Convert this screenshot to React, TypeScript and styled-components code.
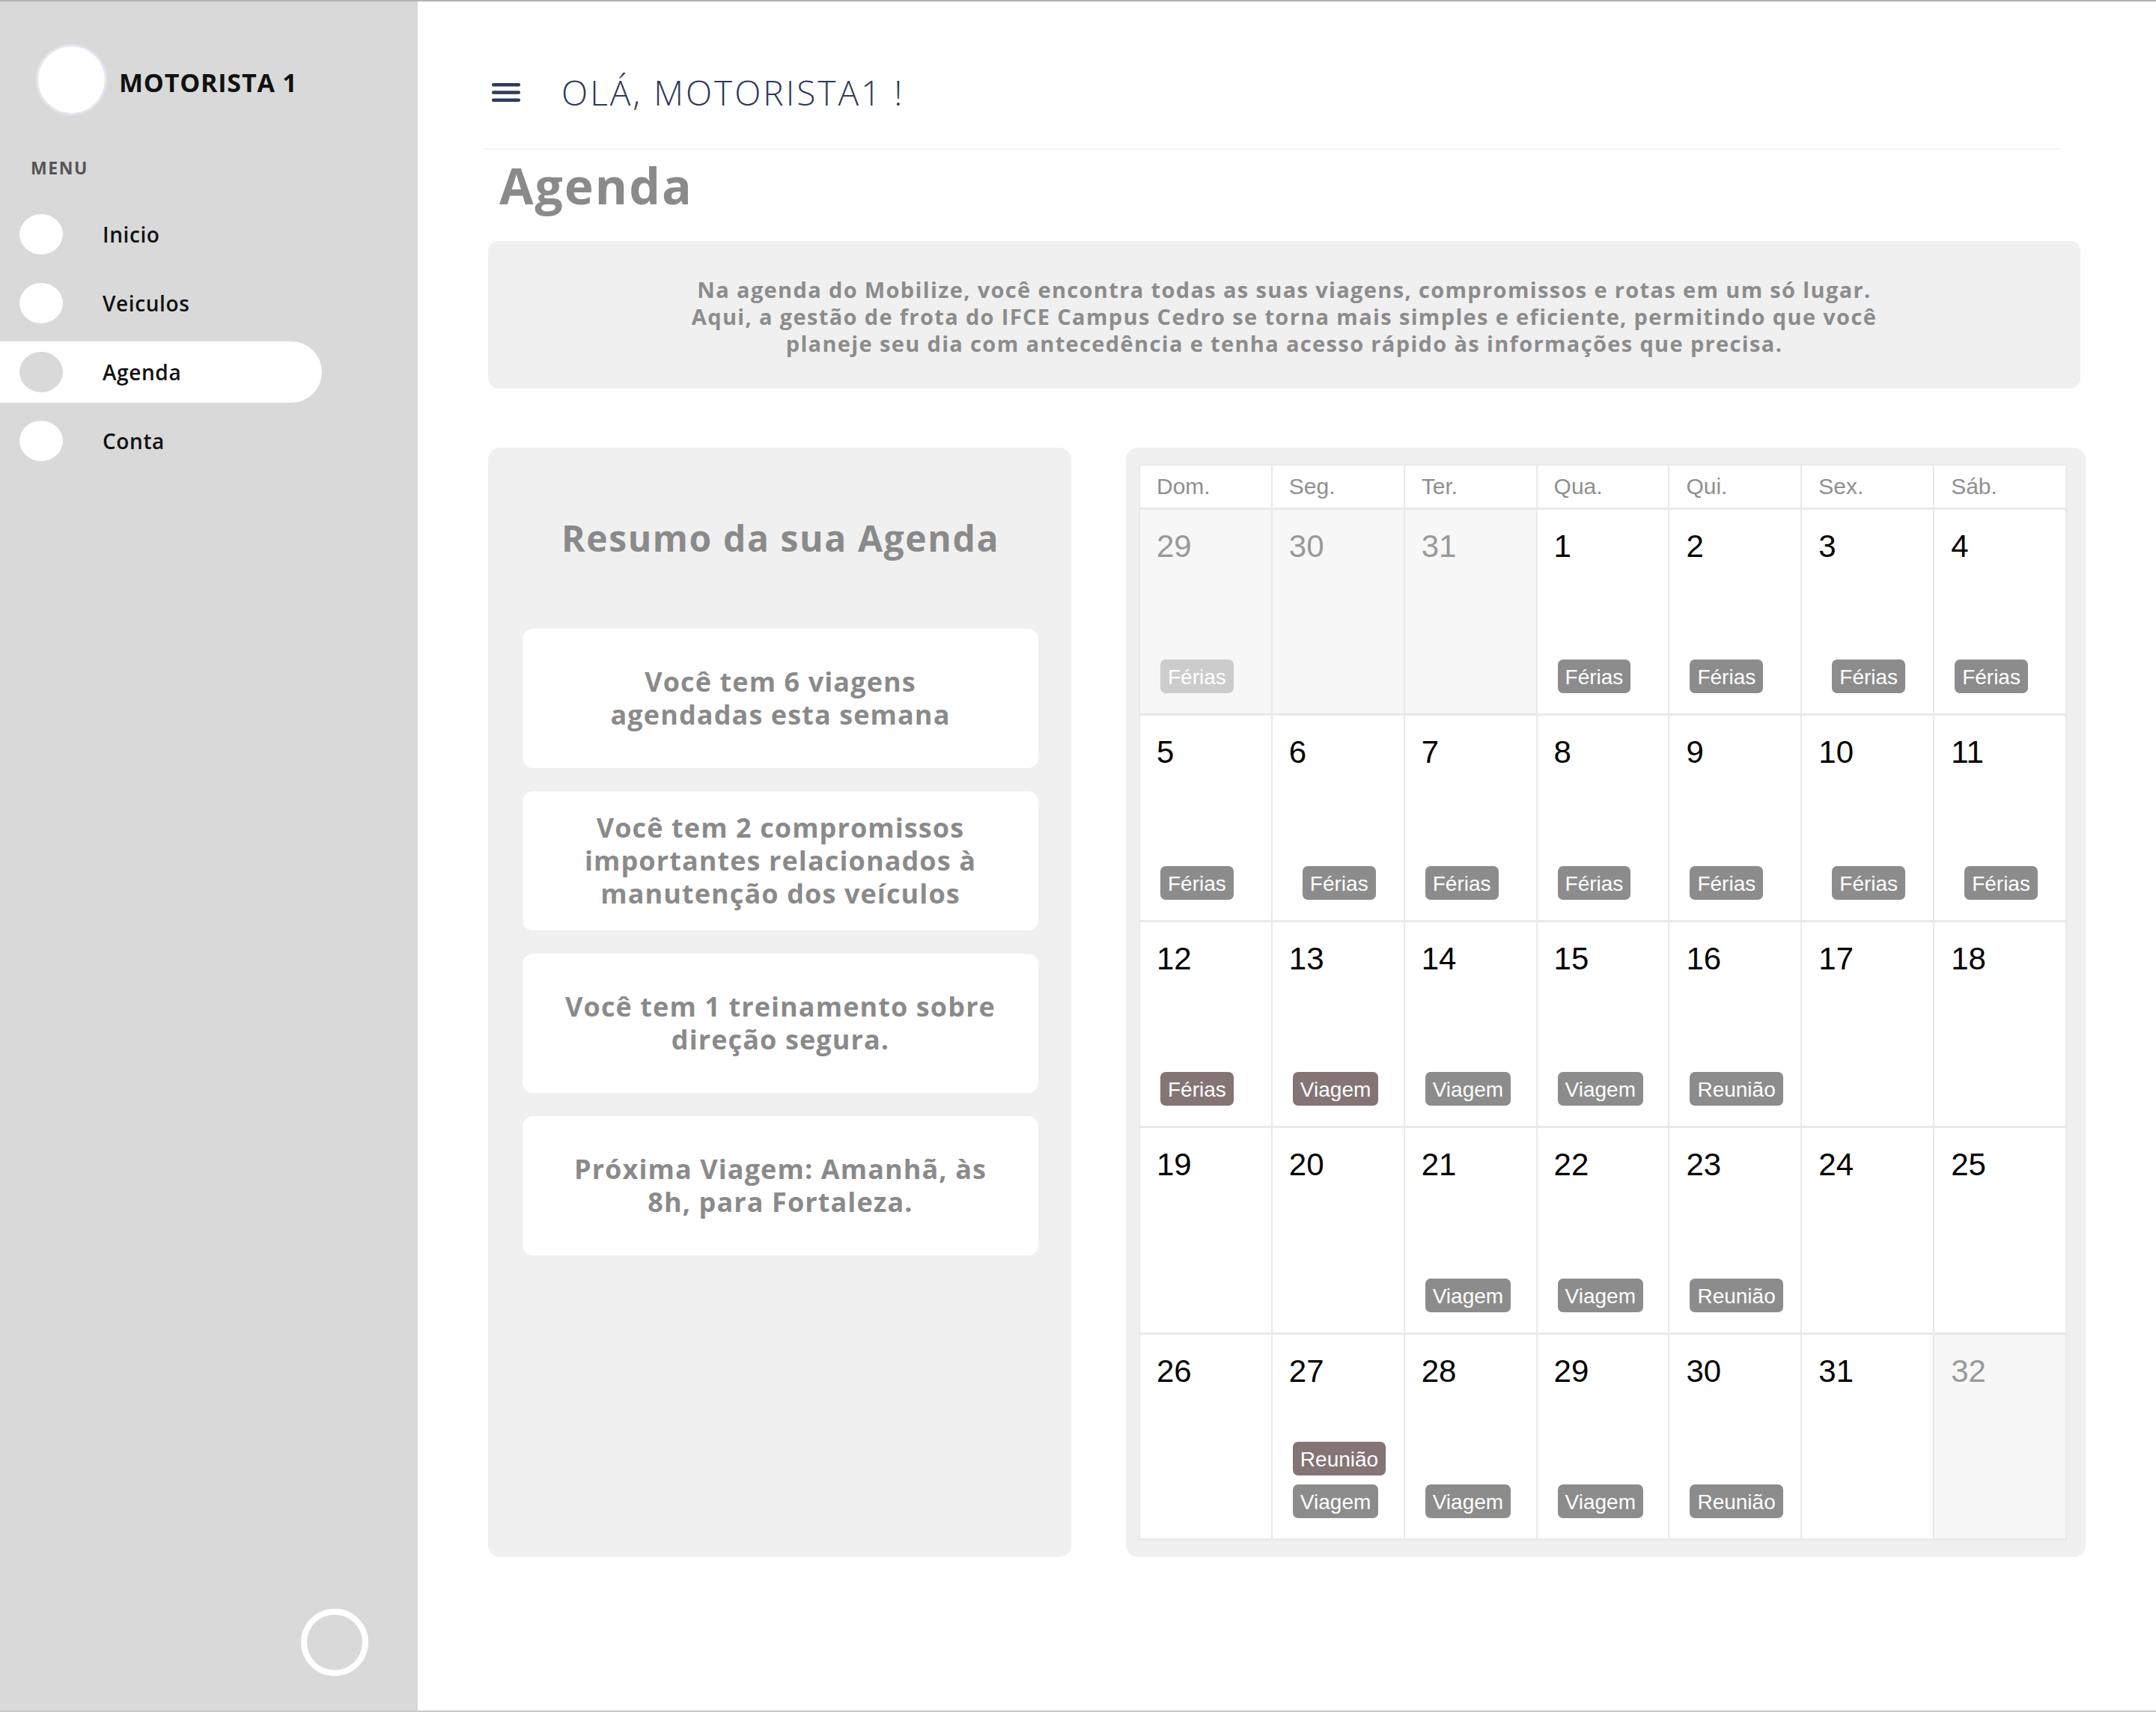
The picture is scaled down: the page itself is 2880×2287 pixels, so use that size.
import {FC, Fragment} from 'react';
import styled, {createGlobalStyle} from 'styled-components';

const GlobalStyle = createGlobalStyle`
  * {
    box-sizing: border-box;
  }
  html, body {
    margin: 0;
    padding: 0;
    background: #ffffff;
  }
  body {
    font-family: 'Open Sans', 'Noto Sans', sans-serif;
  }
`;

const Page = styled.div`
  display: flex;
  width: 2880px;
  height: 2287px;
  border-top: 2px solid #b3b3b3;
  border-bottom: 2px solid #c8c8c8;
  overflow: hidden;
`;

/* ---------- sidebar ---------- */

const Sidebar = styled.aside`
  width: 558px;
  flex-shrink: 0;
  background: #d9d9d9;
  display: flex;
  flex-direction: column;
  padding: 57px 0 46px;
`;

const Profile = styled.div`
  display: flex;
  align-items: center;
  gap: 16px;
  padding-left: 48px;
`;

const Avatar = styled.div`
  width: 95px;
  height: 95px;
  border-radius: 50%;
  background: #ffffff;
  border: 3px solid #e4e4ee;
`;

const ProfileName = styled.p`
  margin: 6px 0 0;
  font-size: 34px;
  font-weight: 700;
  color: #111111;
  letter-spacing: 0.8px;
`;

const MenuLabel = styled.p`
  margin: 54px 0 32px 41px;
  font-size: 23px;
  font-weight: 700;
  color: #555555;
  letter-spacing: 1.6px;
`;

const MenuList = styled.nav`
  display: flex;
  flex-direction: column;
  gap: 10px;
`;

const MenuItem = styled.div<{$active?: boolean}>`
  display: flex;
  align-items: center;
  gap: 53px;
  width: 430px;
  height: 82px;
  padding-left: 26px;
  border-radius: 0 41px 41px 0;
  background: ${({$active}) => ($active ? '#ffffff' : 'transparent')};
`;

const MenuDot = styled.span<{$active?: boolean}>`
  width: 58px;
  height: 54px;
  border-radius: 50%;
  background: ${({$active}) => ($active ? '#d9d9d9' : '#ffffff')};
`;

const MenuText = styled.span`
  font-size: 28px;
  font-weight: 600;
  color: #111111;
  letter-spacing: 0.6px;
`;

const LogoutRing = styled.div`
  margin-top: auto;
  align-self: flex-end;
  margin-right: 66px;
  width: 90px;
  height: 90px;
  border-radius: 50%;
  border: 8px solid #ffffff;
`;

/* ---------- main ---------- */

const Main = styled.main`
  flex: 1;
  min-width: 0;
  display: flex;
  flex-direction: column;
  padding: 0 94px 0 94px;
`;

const TopBar = styled.header`
  display: flex;
  align-items: center;
  gap: 55px;
  height: 70px;
  margin-top: 86px;
  padding-left: 5px;
`;

const Greeting = styled.h1`
  margin: 0;
  font-size: 46px;
  font-weight: 300;
  color: #2e3a59;
  letter-spacing: 3px;
`;

const Divider = styled.div`
  height: 2px;
  margin: 40px 31px 0 -6px;
  background: #f4f4f4;
`;

const PageTitle = styled.h2`
  margin: 12px 0 0 15px;
  font-size: 66px;
  font-weight: 700;
  color: #8a8a8a;
  line-height: 70px;
  letter-spacing: 2px;
`;

const Intro = styled.section`
  margin: 40px 7px 0 0;
  height: 197px;
  border-radius: 14px;
  background: #f0f0f0;
  display: flex;
  align-items: center;
  justify-content: center;
`;

const IntroText = styled.p`
  margin: 4px 0 0;
  text-align: center;
  font-size: 29px;
  font-weight: 700;
  line-height: 36px;
  letter-spacing: 1.35px;
  color: #8c8c8c;
`;

const Panels = styled.div`
  display: flex;
  gap: 73px;
  margin-top: 79px;
`;

const SummaryPanel = styled.section`
  width: 779px;
  flex-shrink: 0;
  height: 1482px;
  border-radius: 16px;
  background: #f0f0f0;
  padding: 88px 44px 0 46px;
  display: flex;
  flex-direction: column;
`;

const SummaryTitle = styled.h3`
  margin: 0 0 88px;
  text-align: center;
  font-size: 48px;
  font-weight: 700;
  color: #8a8a8a;
  line-height: 66px;
  letter-spacing: 1.6px;
`;

const SummaryList = styled.div`
  display: flex;
  flex-direction: column;
  gap: 31px;
`;

const SummaryCard = styled.div`
  height: 186px;
  border-radius: 14px;
  background: #ffffff;
  display: flex;
  align-items: center;
  justify-content: center;
  padding: 0 20px;
`;

const SummaryText = styled.p`
  margin: 0;
  text-align: center;
  font-size: 36px;
  font-weight: 700;
  line-height: 44px;
  letter-spacing: 1.1px;
  color: #8a8a8a;
`;

/* ---------- calendar ---------- */

const CalendarPanel = styled.section`
  flex: 1;
  height: 1482px;
  border-radius: 16px;
  background: #f0f0f0;
  padding: 22px 25px 22px 17px;
`;

const CalendarGrid = styled.div`
  display: grid;
  grid-template-columns: repeat(7, 1fr);
  grid-template-rows: 59px repeat(5, 1fr);
  height: 100%;
  background: #ffffff;
  border-top: 2px solid #e9e9e9;
  border-left: 2px solid #e9e9e9;
  font-family: 'Liberation Sans', Arial, sans-serif;
`;

const WeekdayCell = styled.div`
  display: flex;
  align-items: center;
  padding-left: 22px;
  border-right: 2px solid #e9e9e9;
  border-bottom: 3px solid #e9e9e9;
  font-size: 30px;
  color: #8f8f8f;
`;

const DayCell = styled.div<{$outside?: boolean}>`
  display: flex;
  flex-direction: column;
  padding: 25px 10px 27px 22px;
  border-right: 2px solid #e9e9e9;
  border-bottom: 3px solid #e9e9e9;
  background: ${({$outside}) => ($outside ? '#f7f7f7' : '#ffffff')};
`;

const DayNumber = styled.span<{$outside?: boolean}>`
  font-size: 42px;
  line-height: 48px;
  color: ${({$outside}) => ($outside ? '#999999' : '#000000')};
`;

const TagStack = styled.div<{$indent?: boolean}>`
  margin-top: auto;
  display: flex;
  flex-direction: column;
  align-items: flex-start;
  gap: 12px;
  padding-left: ${({$indent}) => ($indent ? '18px' : '5px')};
`;

type TagTone = 'default' | 'accent' | 'muted';

const tagColors: Record<TagTone, string> = {
  default: '#8c8c8c',
  accent: '#847474',
  muted: '#cccccc',
};

const Tag = styled.span<{$tone: TagTone}>`
  height: 45px;
  line-height: 47px;
  padding: 0 10px;
  border-radius: 7px;
  font-size: 28px;
  color: #ffffff;
  background: ${({$tone}) => tagColors[$tone]};
`;

interface IEvent {
  label: string;
  tone?: TagTone;
}

interface IDay {
  day: number;
  outside?: boolean;
  indent?: boolean;
  events?: IEvent[];
}

const ferias: IEvent[] = [{label: 'Férias'}];
const viagem: IEvent[] = [{label: 'Viagem'}];
const reuniao: IEvent[] = [{label: 'Reunião'}];

const weekdays = ['Dom.', 'Seg.', 'Ter.', 'Qua.', 'Qui.', 'Sex.', 'Sáb.'];

const days: IDay[] = [
  {day: 29, outside: true, events: [{label: 'Férias', tone: 'muted'}]},
  {day: 30, outside: true},
  {day: 31, outside: true},
  {day: 1, events: ferias},
  {day: 2, events: ferias},
  {day: 3, indent: true, events: ferias},
  {day: 4, events: ferias},

  {day: 5, events: ferias},
  {day: 6, indent: true, events: ferias},
  {day: 7, events: ferias},
  {day: 8, events: ferias},
  {day: 9, events: ferias},
  {day: 10, indent: true, events: ferias},
  {day: 11, indent: true, events: ferias},

  {day: 12, events: [{label: 'Férias', tone: 'accent'}]},
  {day: 13, events: [{label: 'Viagem', tone: 'accent'}]},
  {day: 14, events: viagem},
  {day: 15, events: viagem},
  {day: 16, events: reuniao},
  {day: 17},
  {day: 18},

  {day: 19},
  {day: 20},
  {day: 21, events: viagem},
  {day: 22, events: viagem},
  {day: 23, events: reuniao},
  {day: 24},
  {day: 25},

  {day: 26},
  {day: 27, events: [{label: 'Reunião', tone: 'accent'}, {label: 'Viagem'}]},
  {day: 28, events: viagem},
  {day: 29, events: viagem},
  {day: 30, events: reuniao},
  {day: 31},
  {day: 32, outside: true},
];

const menu = [
  {label: 'Inicio'},
  {label: 'Veiculos'},
  {label: 'Agenda', active: true},
  {label: 'Conta'},
];

const summaries: string[][] = [
  ['Você tem 6 viagens', 'agendadas esta semana'],
  ['Você tem 2 compromissos', 'importantes relacionados à', 'manutenção dos veículos'],
  ['Você tem 1 treinamento sobre', 'direção segura.'],
  ['Próxima Viagem: Amanhã, às', '8h, para Fortaleza.'],
];

const MenuIcon: FC = () => (
  <svg width='38' height='25' viewBox='0 0 38 25' fill='#2e3a59'>
    <rect x='0' y='0' width='38' height='4.6' rx='2' />
    <rect x='0' y='10.2' width='38' height='4.6' rx='2' />
    <rect x='0' y='20.4' width='38' height='4.6' rx='2' />
  </svg>
);

const App: FC = () => (
  <>
    <GlobalStyle />
    <Page>
      <Sidebar>
        <Profile>
          <Avatar />
          <ProfileName>MOTORISTA 1</ProfileName>
        </Profile>
        <MenuLabel>MENU</MenuLabel>
        <MenuList>
          {menu.map(item => (
            <MenuItem key={item.label} $active={item.active}>
              <MenuDot $active={item.active} />
              <MenuText>{item.label}</MenuText>
            </MenuItem>
          ))}
        </MenuList>
        <LogoutRing />
      </Sidebar>

      <Main>
        <TopBar>
          <MenuIcon />
          <Greeting>OLÁ, MOTORISTA1 !</Greeting>
        </TopBar>
        <Divider />
        <PageTitle>Agenda</PageTitle>

        <Intro>
          <IntroText>
            Na agenda do Mobilize, você encontra todas as suas viagens, compromissos e rotas em um só lugar.
            <br />
            Aqui, a gestão de frota do IFCE Campus Cedro se torna mais simples e eficiente, permitindo que você
            <br />
            planeje seu dia com antecedência e tenha acesso rápido às informações que precisa.
          </IntroText>
        </Intro>

        <Panels>
          <SummaryPanel>
            <SummaryTitle>Resumo da sua Agenda</SummaryTitle>
            <SummaryList>
              {summaries.map(lines => (
                <SummaryCard key={lines[0]}>
                  <SummaryText>
                    {lines.map((line, i) => (
                      <Fragment key={line}>
                        {i > 0 && <br />}
                        {line}
                      </Fragment>
                    ))}
                  </SummaryText>
                </SummaryCard>
              ))}
            </SummaryList>
          </SummaryPanel>

          <CalendarPanel>
            <CalendarGrid>
              {weekdays.map(w => (
                <WeekdayCell key={w}>{w}</WeekdayCell>
              ))}
              {days.map((d, i) => (
                <DayCell key={i} $outside={d.outside}>
                  <DayNumber $outside={d.outside}>{d.day}</DayNumber>
                  {d.events && (
                    <TagStack $indent={d.indent}>
                      {d.events.map(ev => (
                        <Tag key={ev.label} $tone={ev.tone ?? 'default'}>
                          {ev.label}
                        </Tag>
                      ))}
                    </TagStack>
                  )}
                </DayCell>
              ))}
            </CalendarGrid>
          </CalendarPanel>
        </Panels>
      </Main>
    </Page>
  </>
);

export default App;
